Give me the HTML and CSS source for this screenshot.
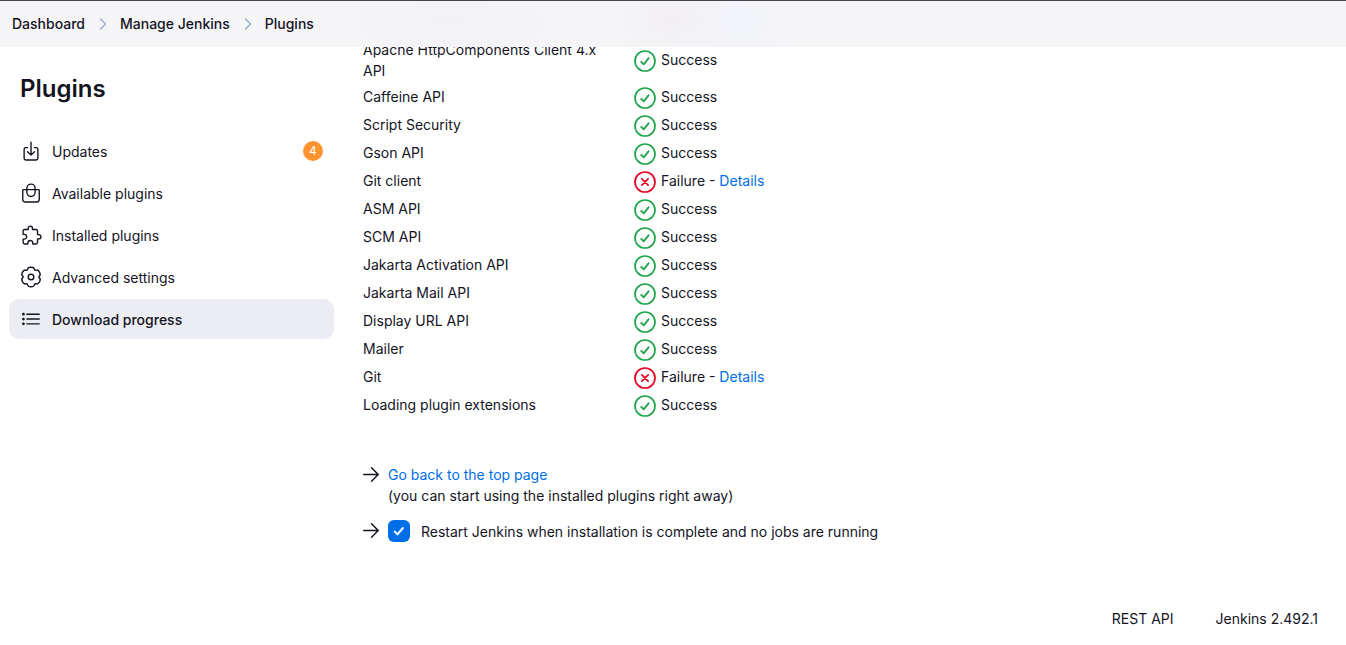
FILE: index.html
```html
<!DOCTYPE html>
<html lang="en">
<head>
<meta charset="utf-8">
<title>Plugins - Jenkins</title>
<link rel="stylesheet" href="styles.css">
</head>
<body>
<svg class="sprite" aria-hidden="true">
  <symbol id="ok" viewBox="0 0 22 22"><circle cx="11" cy="11" r="10" stroke-width="1.7"/><path d="M7.2 11.8l2.5 2.6 5-6.3" stroke-width="1.8"/></symbol>
  <symbol id="fail" viewBox="0 0 22 22"><circle cx="11" cy="11" r="10" stroke-width="1.7"/><path d="M7.9 7.9l6.2 6.2M14.1 7.9l-6.2 6.2" stroke-width="1.7"/></symbol>
  <symbol id="arrow" viewBox="83 90 346 332"><path d="M268 112l144 144-144 144M392 256H100" stroke-width="32"/></symbol>
  <symbol id="chevron" viewBox="0 0 8 12"><path d="M1.5 1l5 5-5 5" stroke-width="1.6"/></symbol>
</svg>
<header class="breadcrumbs">
  <nav aria-label="Breadcrumb">
    <ol class="crumbs">
      <li><a href="#">Dashboard</a></li>
      <li><svg class="chevron" aria-hidden="true"><use href="#chevron"/></svg><a href="#">Manage Jenkins</a></li>
      <li><svg class="chevron" aria-hidden="true"><use href="#chevron"/></svg><a href="#">Plugins</a></li>
    </ol>
  </nav>
</header>
<div class="page">
  <aside class="side">
    <h1>Plugins</h1>
    <nav class="tasks" aria-label="Plugins">
      <a class="task" href="#"><svg viewBox="0 0 512 512" aria-hidden="true"><path d="M336 176h40a40 40 0 0140 40v208a40 40 0 01-40 40H136a40 40 0 01-40-40V216a40 40 0 0140-40h40M176 272l80 80 80-80M256 48v288"/></svg><span>Updates</span><span class="badge">4</span></a>
      <a class="task" href="#"><svg viewBox="0 0 512 512" aria-hidden="true"><path d="M80 176h352a16 16 0 0116 16v216c0 30-26 56-56 56H120c-30 0-56-25-56-55V192a16 16 0 0116-16zM160 176v-32a96 96 0 0196-96 96 96 0 0196 96v32M160 176v64a96 96 0 0096 96 96 96 0 0096-96v-64"/></svg><span>Available plugins</span></a>
      <a class="task" href="#"><svg viewBox="-24 0 512 512" aria-hidden="true"><path d="M413.66 246.1H386a2 2 0 01-2-2v-77.24A38.86 38.86 0 00345.14 128H267.9a2 2 0 01-2-2V98.34c0-27.14-21.5-49.86-48.64-50.33a49.53 49.53 0 00-50.4 49.51V126a2 2 0 01-2 2H87.62A39.74 39.74 0 0048 167.62V238a2 2 0 002 2h26.91c29.37 0 53.68 25.48 54.09 54.85.42 29.87-23.51 57.15-53.29 57.15H50a2 2 0 00-2 2v70.38A39.74 39.74 0 0087.62 464H158a2 2 0 002-2v-20.93c0-30.28 24.75-56.35 55-57.06 30.1-.7 57 20.31 57 50.28V462a2 2 0 002 2h71.14A38.86 38.86 0 00384 425.14v-78a2 2 0 012-2h28.48c27.63 0 49.52-22.67 49.52-50.4s-23.2-48.64-50.34-48.64z"/></svg><span>Installed plugins</span></a>
      <a class="task" href="#"><svg class="gear" viewBox="0 0 22 22" aria-hidden="true"><circle cx="11" cy="11" r="2.8"/><path d="M11 1.25Q14 1.25 14.3 3Q14.6 4.76 16.3 4.15Q17.96 3.54 19.45 6.1Q20.94 8.7 19.55 9.85Q18.2 11 19.55 12.15Q20.94 13.3 19.45 15.9Q17.96 18.46 16.3 17.85Q14.6 17.24 14.3 19Q14 20.75 11 20.75Q8 20.75 7.7 19Q7.4 17.24 5.7 17.85Q4.04 18.46 2.55 15.9Q1.06 13.3 2.45 12.15Q3.8 11 2.45 9.85Q1.06 8.7 2.55 6.1Q4.04 3.54 5.7 4.15Q7.4 4.76 7.7 3Q8 1.25 11 1.25z"/></svg><span>Advanced settings</span></a>
      <a class="task active" href="#" aria-current="page"><svg viewBox="0 0 512 512" aria-hidden="true"><path d="M160 144h288M160 256h288M160 368h288"/><g class="dots"><circle cx="80" cy="144" r="16"/><circle cx="80" cy="256" r="16"/><circle cx="80" cy="368" r="16"/></g></svg><span>Download progress</span></a>
    </nav>
  </aside>
  <main class="main">
    <table class="jobs">
      <tbody>
        <tr><td>Apache HttpComponents Client 4.x API</td><td><div class="status"><svg class="ok" aria-hidden="true"><use href="#ok"/></svg><span>Success</span></div></td></tr>
        <tr><td>Caffeine API</td><td><div class="status"><svg class="ok" aria-hidden="true"><use href="#ok"/></svg><span>Success</span></div></td></tr>
        <tr><td>Script Security</td><td><div class="status"><svg class="ok" aria-hidden="true"><use href="#ok"/></svg><span>Success</span></div></td></tr>
        <tr><td>Gson API</td><td><div class="status"><svg class="ok" aria-hidden="true"><use href="#ok"/></svg><span>Success</span></div></td></tr>
        <tr><td>Git client</td><td><div class="status"><svg class="fail" aria-hidden="true"><use href="#fail"/></svg><span>Failure - <a href="#">Details</a></span></div></td></tr>
        <tr><td>ASM API</td><td><div class="status"><svg class="ok" aria-hidden="true"><use href="#ok"/></svg><span>Success</span></div></td></tr>
        <tr><td>SCM API</td><td><div class="status"><svg class="ok" aria-hidden="true"><use href="#ok"/></svg><span>Success</span></div></td></tr>
        <tr><td>Jakarta Activation API</td><td><div class="status"><svg class="ok" aria-hidden="true"><use href="#ok"/></svg><span>Success</span></div></td></tr>
        <tr><td>Jakarta Mail API</td><td><div class="status"><svg class="ok" aria-hidden="true"><use href="#ok"/></svg><span>Success</span></div></td></tr>
        <tr><td>Display URL API</td><td><div class="status"><svg class="ok" aria-hidden="true"><use href="#ok"/></svg><span>Success</span></div></td></tr>
        <tr><td>Mailer</td><td><div class="status"><svg class="ok" aria-hidden="true"><use href="#ok"/></svg><span>Success</span></div></td></tr>
        <tr><td>Git</td><td><div class="status"><svg class="fail" aria-hidden="true"><use href="#fail"/></svg><span>Failure - <a href="#">Details</a></span></div></td></tr>
        <tr><td>Loading plugin extensions</td><td><div class="status"><svg class="ok" aria-hidden="true"><use href="#ok"/></svg><span>Success</span></div></td></tr>
      </tbody>
    </table>
    <div class="next">
      <div class="step">
        <svg class="arrow" aria-hidden="true"><use href="#arrow"/></svg>
        <div><a href="#">Go back to the top page</a><br>(you can start using the installed plugins right away)</div>
      </div>
      <div class="step">
        <svg class="arrow" aria-hidden="true"><use href="#arrow"/></svg>
        <label class="restart" for="restart"><input type="checkbox" id="restart" checked><span>Restart Jenkins when installation is complete and no jobs are running</span></label>
      </div>
    </div>
  </main>
</div>
<footer class="footer">
  <a href="#">REST API</a>
  <button type="button">Jenkins 2.492.1</button>
</footer>
</body>
</html>
```
FILE: styles.css
```css
* { box-sizing: border-box; }
body {
  margin: 0;
  min-height: 100vh;
  display: flex;
  flex-direction: column;
  background: #fff;
  color: #14141f;
  font: 14px/21px Inter, "Liberation Sans", sans-serif;
}
svg { fill: none; stroke: currentColor; stroke-linecap: round; stroke-linejoin: round; flex: none; }
a { color: #006ee6; text-decoration: none; }
.sprite { position: absolute; width: 0; height: 0; }

.breadcrumbs {
  position: fixed;
  z-index: 1;
  inset: 0 0 auto;
  padding: 12px;
  border-top: 1px solid #45434a;
  background:
    radial-gradient(ellipse 60px 46px at 670px 18px, #f2eff2, transparent),
    radial-gradient(ellipse 70px 44px at 730px 18px, #f1f3f9, transparent),
    radial-gradient(ellipse 130px 44px at 450px 20px, #f2f2f4, transparent),
    #f5f5f8;
}
.crumbs { display: flex; margin: 0; padding: 0; list-style: none; font-weight: 500; line-height: 22px; }
.crumbs li { display: flex; align-items: center; }
.crumbs a { color: inherit; }
.chevron { width: 8px; height: 12px; margin: 0 13px 0 14px; color: #9cafcc; }

.page { flex: 1; display: grid; grid-template-columns: 325px 1fr; column-gap: 29px; padding: 36px 28px 0 9px; }
h1 { margin: 36px 11px 26px; font-size: 24px; line-height: 33px; font-weight: 600; }
.tasks { display: flex; flex-direction: column; gap: 2px; }
.task {
  display: flex;
  align-items: center;
  height: 40px;
  padding: 0 11px;
  gap: 10px;
  border-radius: 10px;
  color: inherit;
}
.task svg { width: 22px; height: 22px; stroke-width: 32px; }
.task .gear { stroke-width: 1.4px; }
.dots { fill: currentColor; }
.active { background: #ecedf3; font-weight: 500; }
.badge {
  width: 20px;
  height: 20px;
  margin-left: auto;
  border-radius: 50%;
  background: #fe9330;
  color: #fff;
  font-size: 12px;
  line-height: 20px;
  text-align: center;
}

.main { padding-top: 1px; }
.jobs { border-collapse: collapse; }
.jobs td { padding: 3px 0; vertical-align: middle; }
.jobs td:first-child { width: 271px; padding: 2px 34px 3px 0; vertical-align: top; }
.status { display: flex; align-items: center; gap: 5px; line-height: 20px; }
.status span { padding-bottom: 2px; }
.status svg { width: 22px; height: 22px; }
.ok { color: #1ea64b; }
.fail { color: #e6001f; }

.next { display: flex; flex-direction: column; gap: 14px; margin-top: 44px; }
.step { display: flex; gap: 9px; }
.arrow { width: 16px; height: 21px; }
.restart { display: flex; align-items: center; gap: 11px; }
.restart input {
  appearance: none;
  width: 22px;
  height: 22px;
  margin: 0;
  border-radius: 6px;
  background: #006ee6 url("data:image/svg+xml,%3Csvg xmlns='http://www.w3.org/2000/svg' viewBox='0 0 22 22' fill='none' stroke='white' stroke-width='2' stroke-linecap='round' stroke-linejoin='round'%3E%3Cpath d='M6.8 11.6l2.7 2.8 5.4-6.4'/%3E%3C/svg%3E");
}

.footer { display: flex; justify-content: flex-end; gap: 42px; padding: 15px 28px 16px; }
.footer a, .footer button { padding: 0; border: 0; background: none; color: inherit; font: inherit; }
```
